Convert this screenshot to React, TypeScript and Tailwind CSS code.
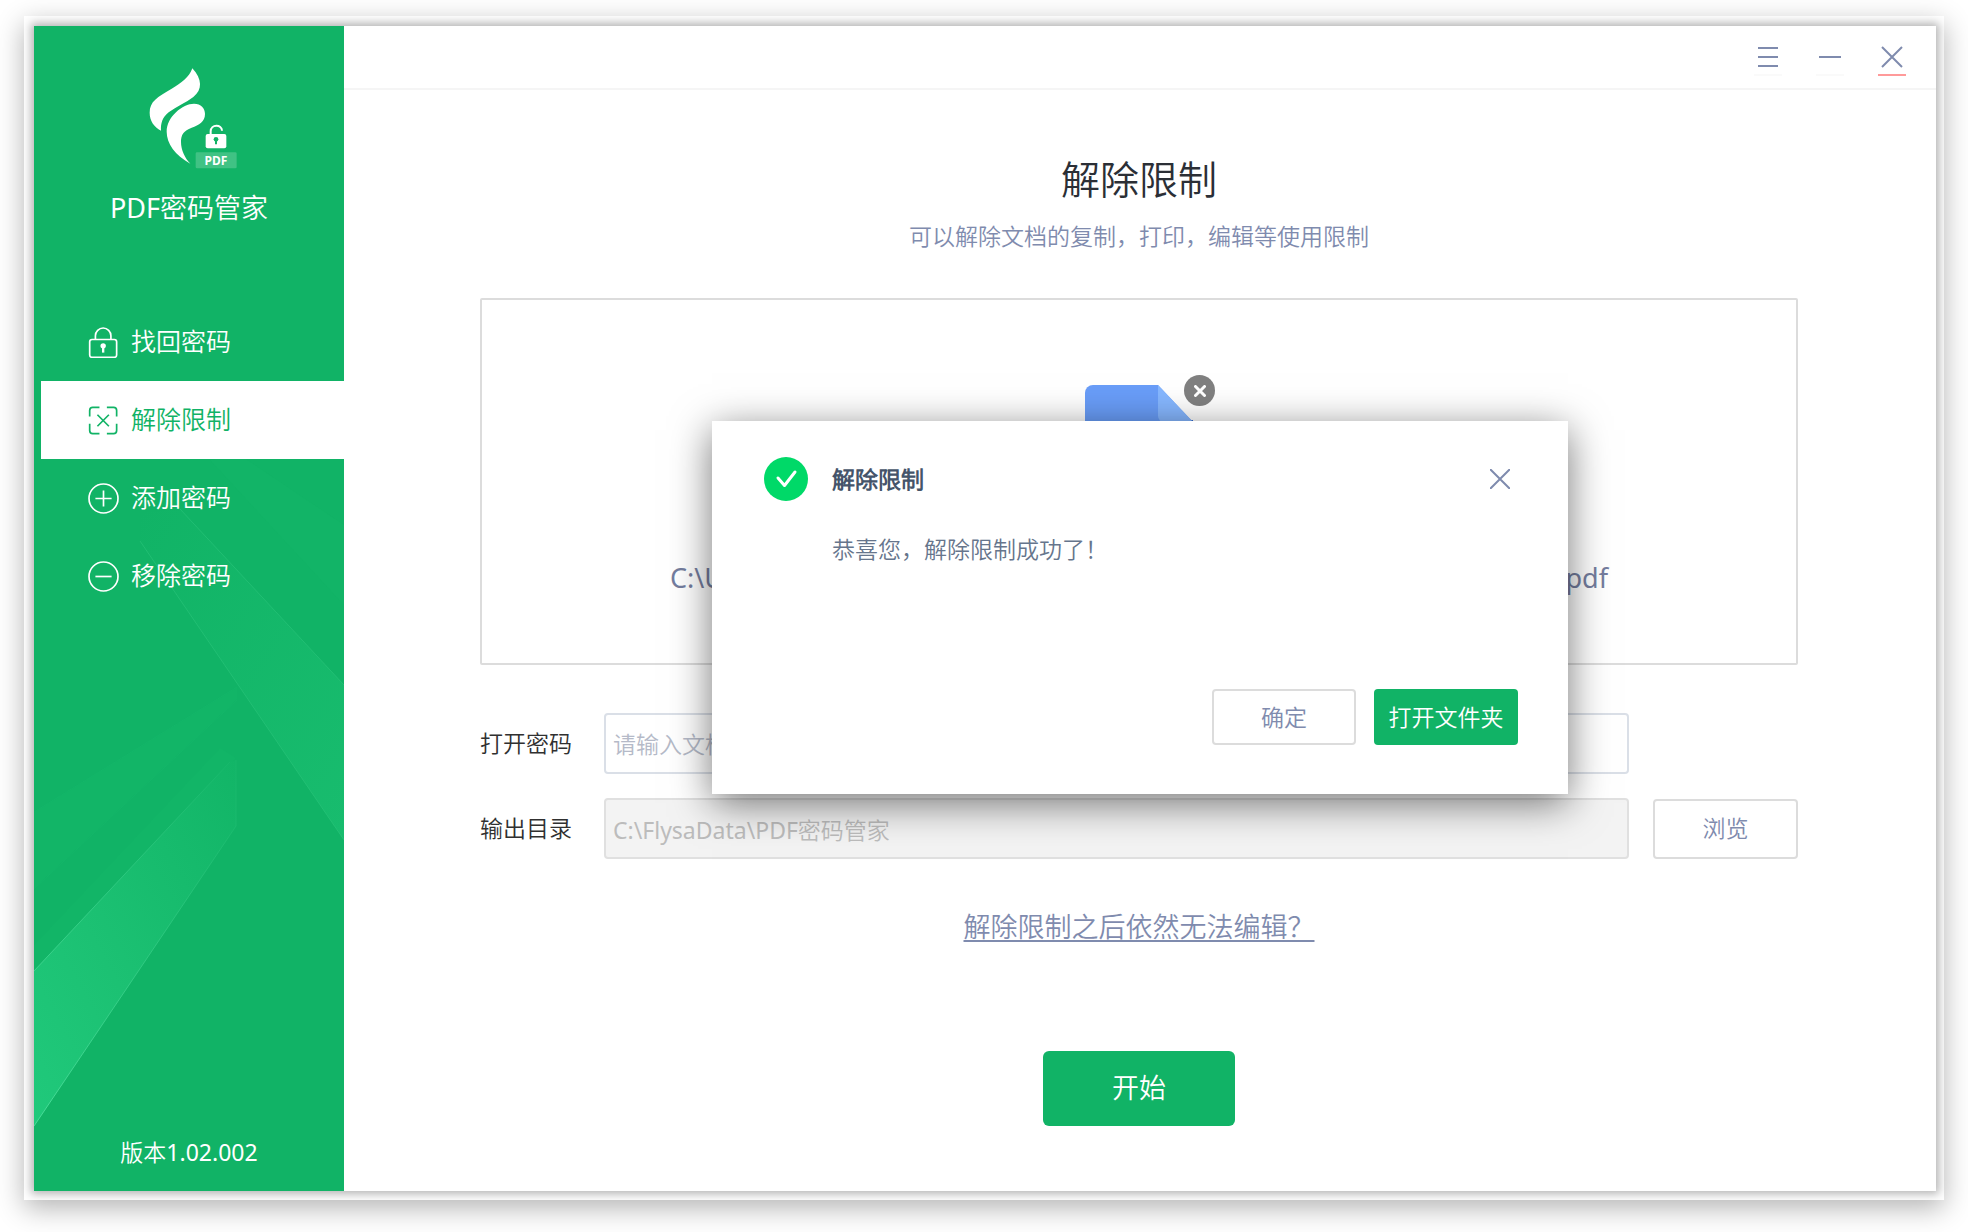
/**
 * PDF密码管家 — main window with the "解除限制" page and its success dialog
 */
import { useState, type FormEvent, type ReactNode } from 'react';

const navItems = [
  { id: 'find', label: '找回密码' },
  { id: 'unlock', label: '解除限制' },
  { id: 'add', label: '添加密码' },
  { id: 'remove', label: '移除密码' },
];

const navIcons: Record<string, ReactNode> = {
  find: (
    <>
      <rect x="5" y="37" width="80" height="53" rx="7"/>
      <path d="M22 36V26a23 23 0 0 1 46 0v10"/>
      <circle cx="45" cy="56" r="8" fill="currentColor" stroke="none"/>
      <path d="M45 58v18" strokeWidth="7"/>
    </>
  ),
  unlock: (
    <>
      <path d="M5 34V16q0-9 9-9h20M56 7h20q9 0 9 9v18M5 56v20q0 9 9 9h20M56 85h20q9 0 9-9V56"/>
      <path d="M28 29l34 34M62 29L28 63"/>
    </>
  ),
  add: (
    <>
      <circle cx="46" cy="46" r="43"/>
      <path d="M22 46h48M46 22v48"/>
    </>
  ),
  remove: (
    <>
      <circle cx="46" cy="46" r="43"/>
      <path d="M22 46h48"/>
    </>
  ),
};

function Logo() {
  return (
    <svg className="w-[104px] h-[108px]" viewBox="411 192 312 324" aria-hidden="true">
      <g fill="#fff">
        <path d="M577 205C566 234 545 248 515 266C472 291 449 304 449 338C449 362 462 381 483 392C482 370 487 352 506 337C530 319 558 308 580 291C608 269 607 238 577 205Z"/>
        <path d="M571 491C525 465 500 430 500 395C500 350 548 311 582 311C603 311 615 325 615 342C615 365 597 375 575 383C551 392 543 404 543 426C543 450 555 475 571 491Z"/>
        <rect x="617" y="402" width="62" height="43" rx="6"/>
      </g>
      <path d="M632 402v-8c0-22 34-22 34-2" fill="none" stroke="#fff" strokeWidth="6"/>
      <circle cx="648" cy="418" r="7" fill="#11b366"/>
      <path d="M648 418v15" stroke="#11b366" strokeWidth="6"/>
      <rect x="587" y="457" width="123" height="48" rx="4" fill="#fff" fillOpacity=".2"/>
      <text x="648" y="494" textAnchor="middle" fontSize="36" fontWeight="700" fill="#fff">PDF</text>
    </svg>
  );
}

/** Faint light beams behind the menu */
function Beams() {
  return (
    <svg className="absolute inset-x-0 bottom-0 w-full h-[780px]" viewBox="34 411 310 780" preserveAspectRatio="none" aria-hidden="true">
      <defs>
        <linearGradient id="beamL" x1="0" y1="1" x2="1" y2="0">
          <stop offset="0" stopColor="#20c97b"/>
          <stop offset=".4" stopColor="#1cc173"/>
          <stop offset="1" stopColor="#12b567"/>
        </linearGradient>
        <linearGradient id="beamR" x1="0" y1="0" x2="1" y2="1">
          <stop offset="0" stopColor="#11b366"/>
          <stop offset="1" stopColor="#18bc6e"/>
        </linearGradient>
        <linearGradient id="edgeL" x1="0" y1="1" x2="1" y2="0">
          <stop offset="0" stopColor="#48dc98"/>
          <stop offset="1" stopColor="#16b76a"/>
        </linearGradient>
      </defs>
      <path d="M210 460L240 455L344 525V605Z" fill="#14b568" fillOpacity=".5"/>
      <path d="M140 513L180 509L344 685V840L140 541Z" fill="url(#beamR)"/>
      <path d="M180 509L344 685M140 541L344 840" fill="none" stroke="#2cc47c" strokeOpacity=".6"/>
      <path d="M34 812L237 687V700L34 889Z" fill="#12b567"/>
      <path d="M34 812L237 687M34 889L237 700" fill="none" stroke="#1cba70" strokeOpacity=".3"/>
      <path d="M34 945L220 748L236 758L34 971Z" fill="#12b567"/>
      <path d="M34 971L230 762L236 760V826L34 1126Z" fill="url(#beamL)"/>
      <path d="M34 971L230 762M236 760V826L34 1126" fill="none" stroke="url(#edgeL)"/>
    </svg>
  );
}

function Sidebar({ active, onSelect }: { active: string; onSelect: (id: string) => void }) {
  return (
    <aside className="relative flex w-[310px] shrink-0 flex-col bg-[#11b366] pt-[38px] pb-6 text-white">
      <Beams/>
      <div className="relative flex flex-col items-center">
        <Logo/>
        <p className="mt-[18px] text-[27px] leading-9">PDF密码管家</p>
      </div>
      <nav className="relative mt-[77px] flex flex-col pl-[7px]">
        {navItems.map(item => (
          <button
            key={item.id}
            type="button"
            onClick={() => onSelect(item.id)}
            className={`flex h-[78px] items-center gap-3 pl-[47px] text-[25px] ${item.id === active ? 'bg-white text-[#11b366]' : ''}`}
          >
            <svg className="size-[31px]" viewBox="0 0 92 92" fill="none" stroke="currentColor" strokeWidth="5" aria-hidden="true">{navIcons[item.id]}</svg>
            {item.label}
          </button>
        ))}
      </nav>
      <p className="relative mt-auto text-center text-[23px] leading-[30px]">版本1.02.002</p>
    </aside>
  );
}

function WindowBar() {
  const btn = 'flex h-[38px] w-7 items-center justify-center border-b-2';
  return (
    <header className="flex h-16 items-center justify-end gap-[34px] border-b-2 border-[#f5f5f5] pr-[30px] text-[#7f8bae]">
      <button type="button" aria-label="菜单" className={`${btn} border-[#fafafa]`}>
        <svg className="size-6" viewBox="0 0 24 24" stroke="currentColor" strokeWidth="2"><path d="M2 4h20M2 13h20M2 22h20"/></svg>
      </button>
      <button type="button" aria-label="最小化" className={`${btn} border-[#fafafa]`}>
        <svg className="size-6" viewBox="0 0 24 24" stroke="currentColor" strokeWidth="2"><path d="M1 13h22"/></svg>
      </button>
      <button type="button" aria-label="关闭" className={`${btn} border-[#ff9a9a]`}>
        <svg className="size-6" viewBox="0 0 24 24" stroke="currentColor" strokeWidth="2"><path d="M2 3l20 20M22 3L2 23"/></svg>
      </button>
    </header>
  );
}

function FileBox() {
  return (
    <div className="mt-[46px] flex h-[367px] flex-col items-center rounded-xs border-2 border-[#dcdcdc] pt-[85px]">
      <div className="relative">
        <svg className="h-[140px] w-[108px]" viewBox="0 0 108 140" aria-hidden="true">
          <path d="M8 0H73L108 37V132a8 8 0 0 1-8 8H8a8 8 0 0 1-8-8V8a8 8 0 0 1 8-8Z" fill="#699df8"/>
          <path d="M77 35H108V60Z" fill="#3169cf"/>
          <path d="M73 0L108 37H79a6 6 0 0 1-6-6Z" fill="#86b7ff"/>
        </svg>
        <button type="button" aria-label="移除文件" className="absolute -top-[10px] -right-[22px] flex size-[31px] items-center justify-center rounded-full bg-[#808080] text-white">
          <svg className="size-3" viewBox="0 0 12 12" stroke="currentColor" strokeWidth="3" strokeLinecap="round"><path d="M1.500 1.500l9 9M10.500 1.500l-9 9"/></svg>
        </button>
      </div>
      <p className="mt-[35px] flex w-[938px] max-w-full justify-between text-[27px] leading-9 text-[#747d9e]">
        <span>C:\Users</span>
        <span>.pdf</span>
      </p>
    </div>
  );
}

function SuccessDialog({ onClose }: { onClose: () => void }) {
  return (
    <div className="absolute inset-x-0 top-[395px] flex justify-center">
      <section role="dialog" aria-labelledby="dialog-title" className="flex min-h-[373px] w-[856px] flex-col bg-white pt-9 pr-[50px] pb-[49px] pl-[52px] shadow-[0_9px_38px_rgba(0,0,0,0.54)]">
        <div className="flex items-center">
          <svg className="size-11" viewBox="0 0 44 44" aria-hidden="true">
            <circle cx="22" cy="22" r="22" fill="#00d968"/>
            <path d="M14 21l6.500 7.500L31 15" fill="none" stroke="#fff" strokeWidth="3" strokeLinecap="round" strokeLinejoin="round"/>
          </svg>
          <h2 id="dialog-title" className="ml-6 text-[23px] leading-8 font-bold text-[#45546a]">解除限制</h2>
          <button type="button" aria-label="关闭" onClick={onClose} className="mr-2 ml-auto text-[#7f8bae]">
            <svg className="size-5" viewBox="0 0 20 20" stroke="currentColor" strokeWidth="2"><path d="M0 0l20 20M20 0L0 20"/></svg>
          </button>
        </div>
        <p className="mt-8 ml-[68px] text-[23px] leading-8 text-[#66758c]">恭喜您，解除限制成功了！</p>
        <div className="mt-auto flex justify-end gap-[18px] text-[23px]">
          <button type="button" onClick={onClose} className="h-14 w-36 rounded-sm border-2 border-[#dcdcdc] text-[#7f8bae]">确定</button>
          <button type="button" className="h-14 w-36 rounded-sm bg-[#11b366] text-white">打开文件夹</button>
        </div>
      </section>
    </div>
  );
}

export default function App() {
  const [active, setActive] = useState('unlock');
  const [password, setPassword] = useState('');
  const [dialogOpen, setDialogOpen] = useState(true);

  const handleSubmit = (e: FormEvent) => {
    e.preventDefault();
    setDialogOpen(true);
  };

  const label = 'w-[124px] shrink-0 text-[#303030]';
  const field = 'h-[61px] min-w-0 flex-1 rounded-sm border-2 px-[7px]';

  return (
    <div className="flex min-h-screen bg-white px-6 pt-4 pb-8 font-['Noto_Sans','Noto_Sans_CJK_SC_DemiLight','Noto_Sans_CJK_SC',sans-serif]">
      <div className="flex flex-1 overflow-hidden bg-white pt-[10px] pr-2 pb-[9px] pl-[10px] shadow-[0_8px_26px_rgba(0,0,0,0.3)]">
        <div className="relative flex flex-1 bg-white shadow-[0_0_9px_3px_rgba(0,0,0,0.3)]">
          <Sidebar active={active} onSelect={setActive}/>
          <main className="relative flex min-w-0 flex-1 flex-col">
            <WindowBar/>
            <form onSubmit={handleSubmit} className="flex flex-col pt-[61px] pr-[138px] pb-16 pl-[136px] text-[23px]">
              <h1 className="text-center text-[39px] leading-14 text-[#2b2f36]">解除限制</h1>
              <p className="mt-[13px] text-center leading-8 text-[#7f8bae]">可以解除文档的复制，打印，编辑等使用限制</p>
              <FileBox/>
              <div className="mt-12 flex items-center">
                <label htmlFor="password" className={label}>打开密码</label>
                <input id="password" type="text" value={password} onChange={e => setPassword(e.target.value)} placeholder="请输入文档的打开密码" className={`${field} mr-[169px] border-[#dadfe7] placeholder:text-[#b5bac8]`}/>
              </div>
              <div className="mt-6 flex items-center">
                <label htmlFor="output" className={label}>输出目录</label>
                <input id="output" type="text" disabled value="C:\FlysaData\PDF密码管家" className={`${field} border-[#e0e0e0] bg-[#f3f3f3] text-[#bcbcbc]`}/>
                <button type="button" className="ml-6 h-[60px] w-[145px] rounded-sm border-2 border-[#dcdcdc] text-[#7f8bae]">浏览</button>
              </div>
              <a href="#help" className="mt-12 self-center text-[27px] leading-10 text-[#7f8bae] underline decoration-2 underline-offset-3">解除限制之后依然无法编辑？</a>
              <button type="submit" className="mt-[104px] h-[75px] w-48 self-center rounded-md bg-[#11b366] text-[27px] text-white">开始</button>
            </form>
            {dialogOpen && <SuccessDialog onClose={() => setDialogOpen(false)}/>}
          </main>
        </div>
      </div>
    </div>
  );
}
